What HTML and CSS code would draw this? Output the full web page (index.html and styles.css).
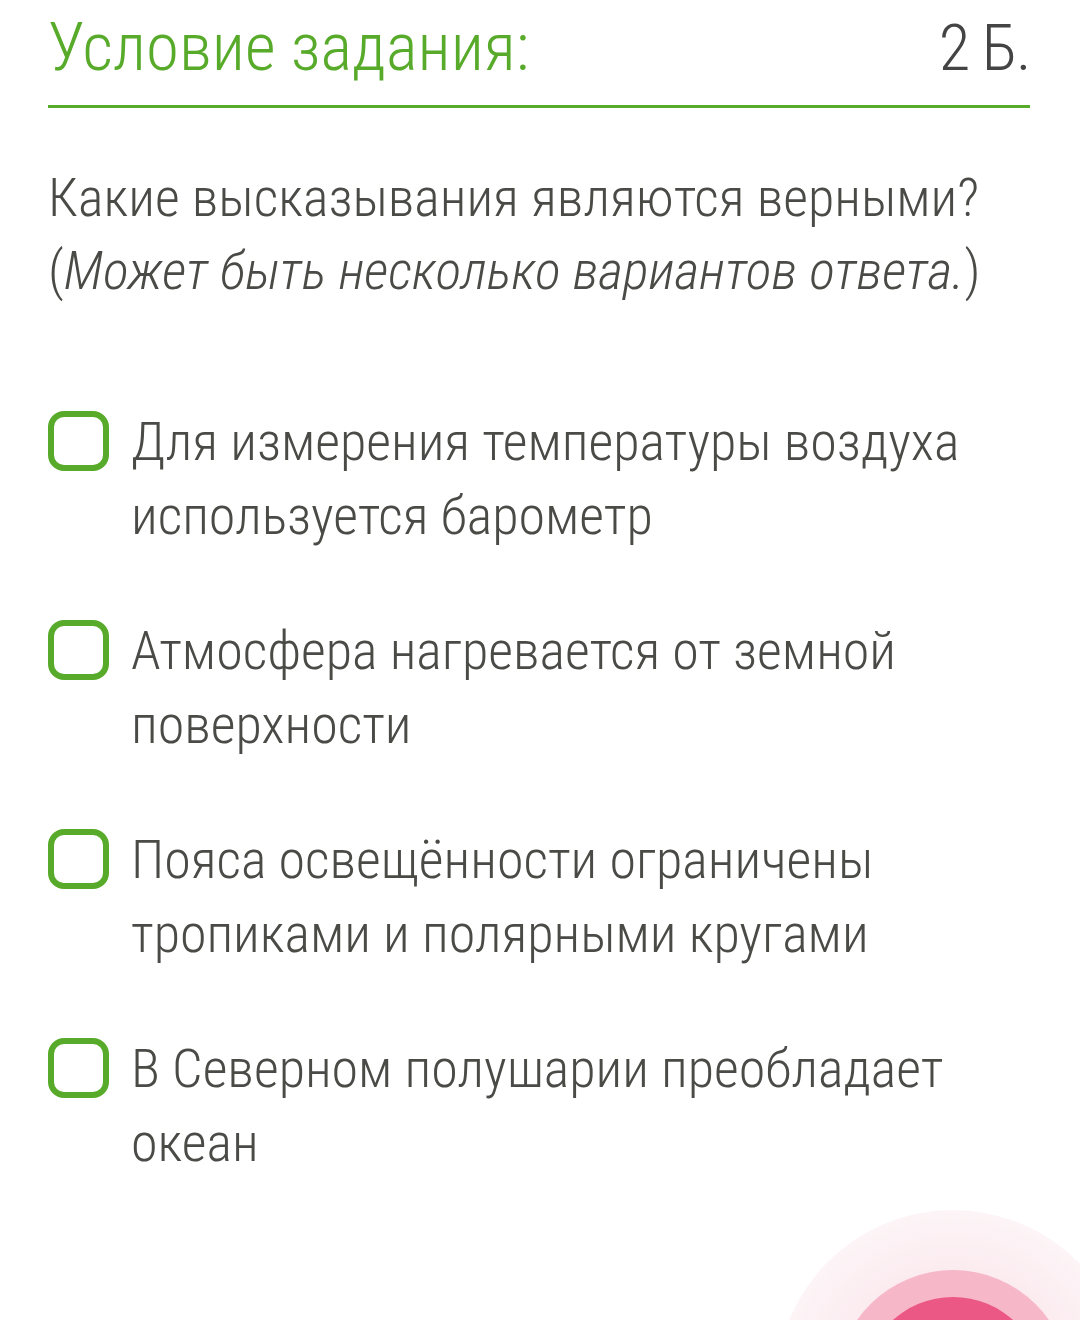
FILE: index.html
```html
<!DOCTYPE html>
<html>
<head>
    <meta charset="UTF-8">
    <meta name="viewport" content="width=device-width, initial-scale=1.0">
    <title>Условие задания</title>
    <link rel="stylesheet" href="styles.css">
</head>
<body>
    <div class="container">
        <div class="task-header">
            <span class="task-title">Условие задания:</span>
            <span class="task-points">2 Б.</span>
        </div>

        <p class="question">
            Какие высказывания являются верными?<br>
            (<em>Может быть несколько вариантов ответа.</em>)
        </p>

        <div class="options">
            <label class="option">
                <span class="checkbox"></span>
                <span class="option-text">Для измерения температуры воздуха используется барометр</span>
            </label>
            <label class="option">
                <span class="checkbox"></span>
                <span class="option-text">Атмосфера нагревается от земной поверхности</span>
            </label>
            <label class="option">
                <span class="checkbox"></span>
                <span class="option-text">Пояса освещённости ограничены тропиками и полярными кругами</span>
            </label>
            <label class="option">
                <span class="checkbox"></span>
                <span class="option-text">В Северном полушарии преобладает океан</span>
            </label>
        </div>
    </div>

    <!-- floating action button, partly off screen -->
    <div class="fab">
        <div class="fab-ring">
            <div class="fab-core"></div>
        </div>
    </div>
</body>
</html>
```

FILE: styles.css
```css
/* Reset and Base Styles */
* {
    margin: 0;
    padding: 0;
    box-sizing: border-box;
}

body {
    background-color: #fff;
    font-family: 'Roboto Condensed', 'Roboto', sans-serif;
    font-weight: 300;
    color: #4a4a46;
    overflow: hidden;
    height: 1320px;
    position: relative;
}

.container {
    padding: 0 50px 0 48px;
}

.task-header {
    display: flex;
    justify-content: space-between;
    align-items: baseline;
    padding-top: 8px;
    height: 108px;
    border-bottom: 3px solid #58ab2a;
}

.task-title {
    font-size: 67px;
    color: #58ab2a;
}

.task-points {
    font-size: 65px;
    letter-spacing: -1.5px;
    color: #444;
}

.question {
    margin-top: 53px;
    font-size: 54px;
    line-height: 73px;
}

.question em {
    font-style: italic;
}

.options {
    display: flex;
    flex-direction: column;
    gap: 61px;
    margin-top: 98px;
}

.option {
    display: flex;
    align-items: flex-start;
    gap: 22px;
}

.checkbox {
    flex-shrink: 0;
    width: 61px;
    height: 60px;
    margin-top: 6px;
    border: 6px solid #58ab2a;
    border-radius: 16px;
}

.option-text {
    font-size: 54px;
    line-height: 74px;
}

.fab {
    position: absolute;
    left: 776px;
    top: 1210px;
    width: 354px;
    height: 354px;
    border-radius: 50%;
    background: radial-gradient(circle, #fbe9ee 40%, #fdf6f8 75%, rgba(255, 255, 255, 0) 100%);
    display: flex;
    align-items: center;
    justify-content: center;
}

.fab-ring {
    width: 234px;
    height: 234px;
    border-radius: 50%;
    background-color: #f6b8c8;
    display: flex;
    align-items: center;
    justify-content: center;
}

.fab-core {
    width: 180px;
    height: 180px;
    border-radius: 50%;
    background-color: #ec5886;
}
```
